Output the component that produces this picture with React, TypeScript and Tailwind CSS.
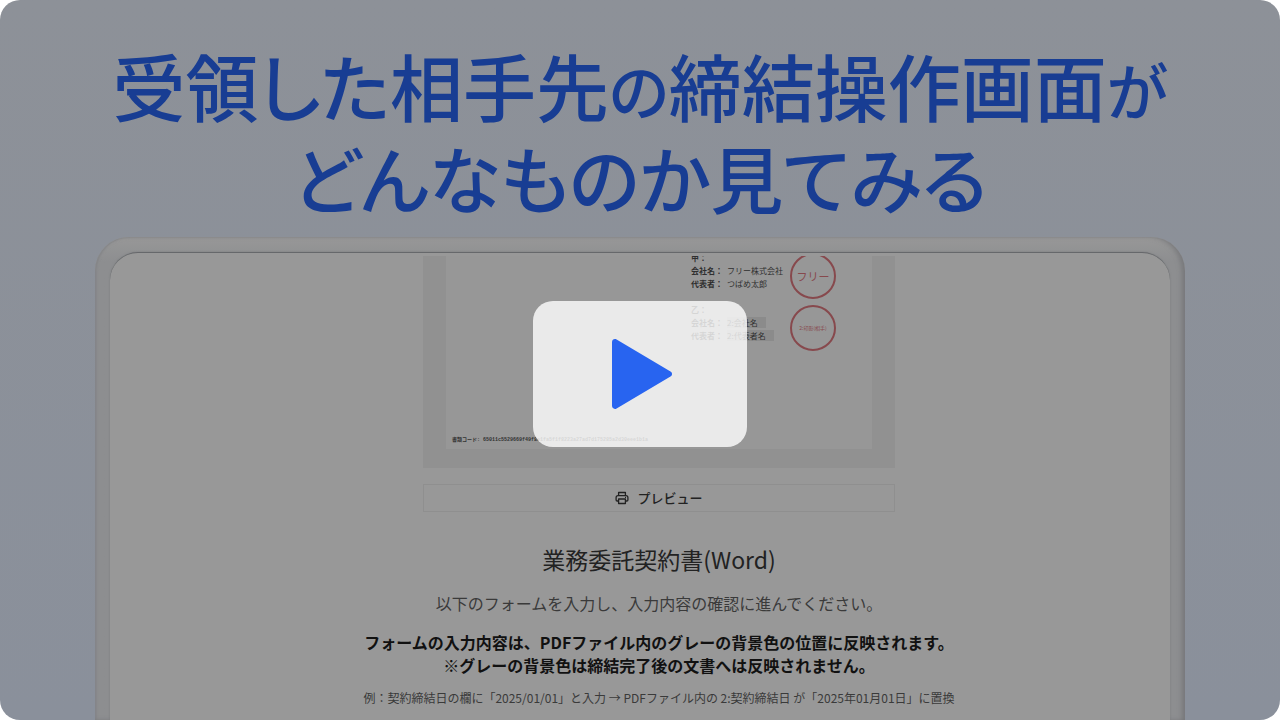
const parties = [
  {
    heading: "甲：",
    rows: [
      { label: "会社名：", value: "フリー株式会社", field: false },
      { label: "代表者：", value: "つばめ太郎", field: false },
    ],
    stamp: "フリー",
    stampSize: "text-[11px]",
  },
  {
    heading: "乙：",
    rows: [
      { label: "会社名：", value: "2:会社名", field: true },
      { label: "代表者：", value: "2:代表者名", field: true },
    ],
    stamp: "2:印影(相手)",
    stampSize: "text-[5px]",
  },
];

function Party({ party }: { party: (typeof parties)[number] }) {
  return (
    <div className="flex items-start justify-between">
      <div className="text-[8px] leading-[13px] text-[#2f2f2f]">
        <p className="font-bold">{party.heading}</p>
        {party.rows.map((row) => (
          <div key={row.label} className="flex gap-1">
            <span className="w-8 font-bold">{row.label}</span>
            <span className={row.field ? "bg-[#8b8b8b] pr-2 leading-[11px] my-px" : ""}>
              {row.value}
            </span>
          </div>
        ))}
      </div>
      <div
        className={`mt-[2px] flex size-[46px] items-center justify-center rounded-full border-2 border-[#87494d] text-[#87494d] ${party.stampSize}`}
      >
        {party.stamp}
      </div>
    </div>
  );
}

function ContractPage() {
  return (
    <div className="bg-[#919191] px-[23px] pb-[19px]">
      <div className="flex h-[193px] flex-col justify-end overflow-hidden bg-[#979797]">
        <div className="mr-9 ml-auto flex w-[145px] flex-col gap-1">
          {parties.map((party) => (
            <Party key={party.heading} party={party} />
          ))}
        </div>
        <p className="mt-[85px] mb-[5px] pl-[6px] font-['Liberation_Mono','Noto_Sans_CJK_JP',monospace] text-[5px] leading-[8px] font-bold whitespace-nowrap text-[#333]">
          書類コード: 65011c5529669f49f8e1fa5f1f8223a27ad7d175285a2d30eee1b1a
        </p>
      </div>
    </div>
  );
}

function PrinterIcon() {
  return (
    <svg
      width="14"
      height="14"
      viewBox="0 0 14 14"
      fill="none"
      stroke="currentColor"
      strokeWidth="1.3"
      strokeLinejoin="round"
      aria-hidden="true"
    >
      <path d="M3.6 4.6V1.5h6.8v3.1" />
      <path d="M3.4 10H2.2Q1.1 10 1.1 8.9V6.6Q1.1 4.6 3.1 4.6H10.9Q12.9 4.6 12.9 6.6V8.9Q12.9 10 11.8 10H10.6" />
      <path d="M3.6 8h6.8v4.5H3.6Z" />
      <path d="M10 6.4h1" />
    </svg>
  );
}

function PlayButton() {
  return (
    <button
      type="button"
      aria-label="再生"
      className="flex h-[146px] w-[214px] cursor-pointer items-center justify-center rounded-[20px] bg-white/80 pl-1"
    >
      <svg width="60" height="70" viewBox="0 0 60 70" fill="#2864f0" aria-hidden="true">
        <path d="M0 3.2C0 .7 2.5-.7 4.6.6L58.5 32.5C60.5 33.7 60.5 36.3 58.5 37.5L4.6 69.4C2.5 70.7 0 69.3 0 66.8Z" />
      </svg>
    </button>
  );
}

export default function App() {
  return (
    <main className="relative flex h-screen flex-col overflow-hidden rounded-[20px] bg-linear-to-b from-[#8d9198] to-[#8a909b] font-['Noto_Sans_CJK_JP',sans-serif]">
      <h1 className="pt-[38px] text-center text-[73px] leading-[92px] font-medium whitespace-nowrap text-[#183d93] [font-feature-settings:'palt']">
        受領した相手先<span className="text-[62px] leading-none">の</span>締結操作画面
        <span className="text-[62px] leading-none">が</span>
        <br />
        どんなものか見てみる
      </h1>

      {/* Tablet */}
      <div className="mx-[95px] mt-[15px] min-h-0 flex-1 rounded-t-[34px] bg-linear-to-b from-[#989898] to-[#8d8e90] to-5% px-[15px] pt-[15px] shadow-[inset_-4px_0_5px_-1px_#76777a,inset_2px_0_2px_#858689,inset_0_2px_3px_#9a9a9a]">
        <div className="h-full overflow-hidden rounded-t-[28px] border-t border-[#66686b] bg-[#989898] pt-[3px] pl-[38px] shadow-[0_0_2px_#77797c]">
          <div className="mx-auto w-[472px]">
            <ContractPage />
            <button
              type="button"
              className="mt-4 flex h-7 w-full items-center justify-center gap-2 border border-[#8f8f8f] text-[13px] font-medium text-[#222]"
            >
              <PrinterIcon />
              プレビュー
            </button>
          </div>

          <div className="text-center whitespace-nowrap text-[#222]">
            <h2 className="mt-[30px] text-[23px] leading-[34px]">業務委託契約書(Word)</h2>
            <p className="mt-4 text-[16px] leading-[23px] text-[#3a3a3a]">
              以下のフォームを入力し、入力内容の確認に進んでください。
            </p>
            <p className="mt-4 text-[16px] leading-[23px] font-bold text-[#111]">
              フォームの入力内容は、PDFファイル内のグレーの背景色の位置に反映されます。
              <br />
              ※グレーの背景色は締結完了後の文書へは反映されません。
            </p>
            <p className="mt-3 text-[12px] leading-[18px] text-[#3a3a3a]">
              例：契約締結日の欄に「2025/01/01」と入力 → PDFファイル内の 2:契約締結日 が「2025年01月01日」に置換
            </p>
          </div>
        </div>
      </div>

      <div className="absolute inset-0 flex items-center justify-center pt-7">
        <PlayButton />
      </div>
    </main>
  );
}
